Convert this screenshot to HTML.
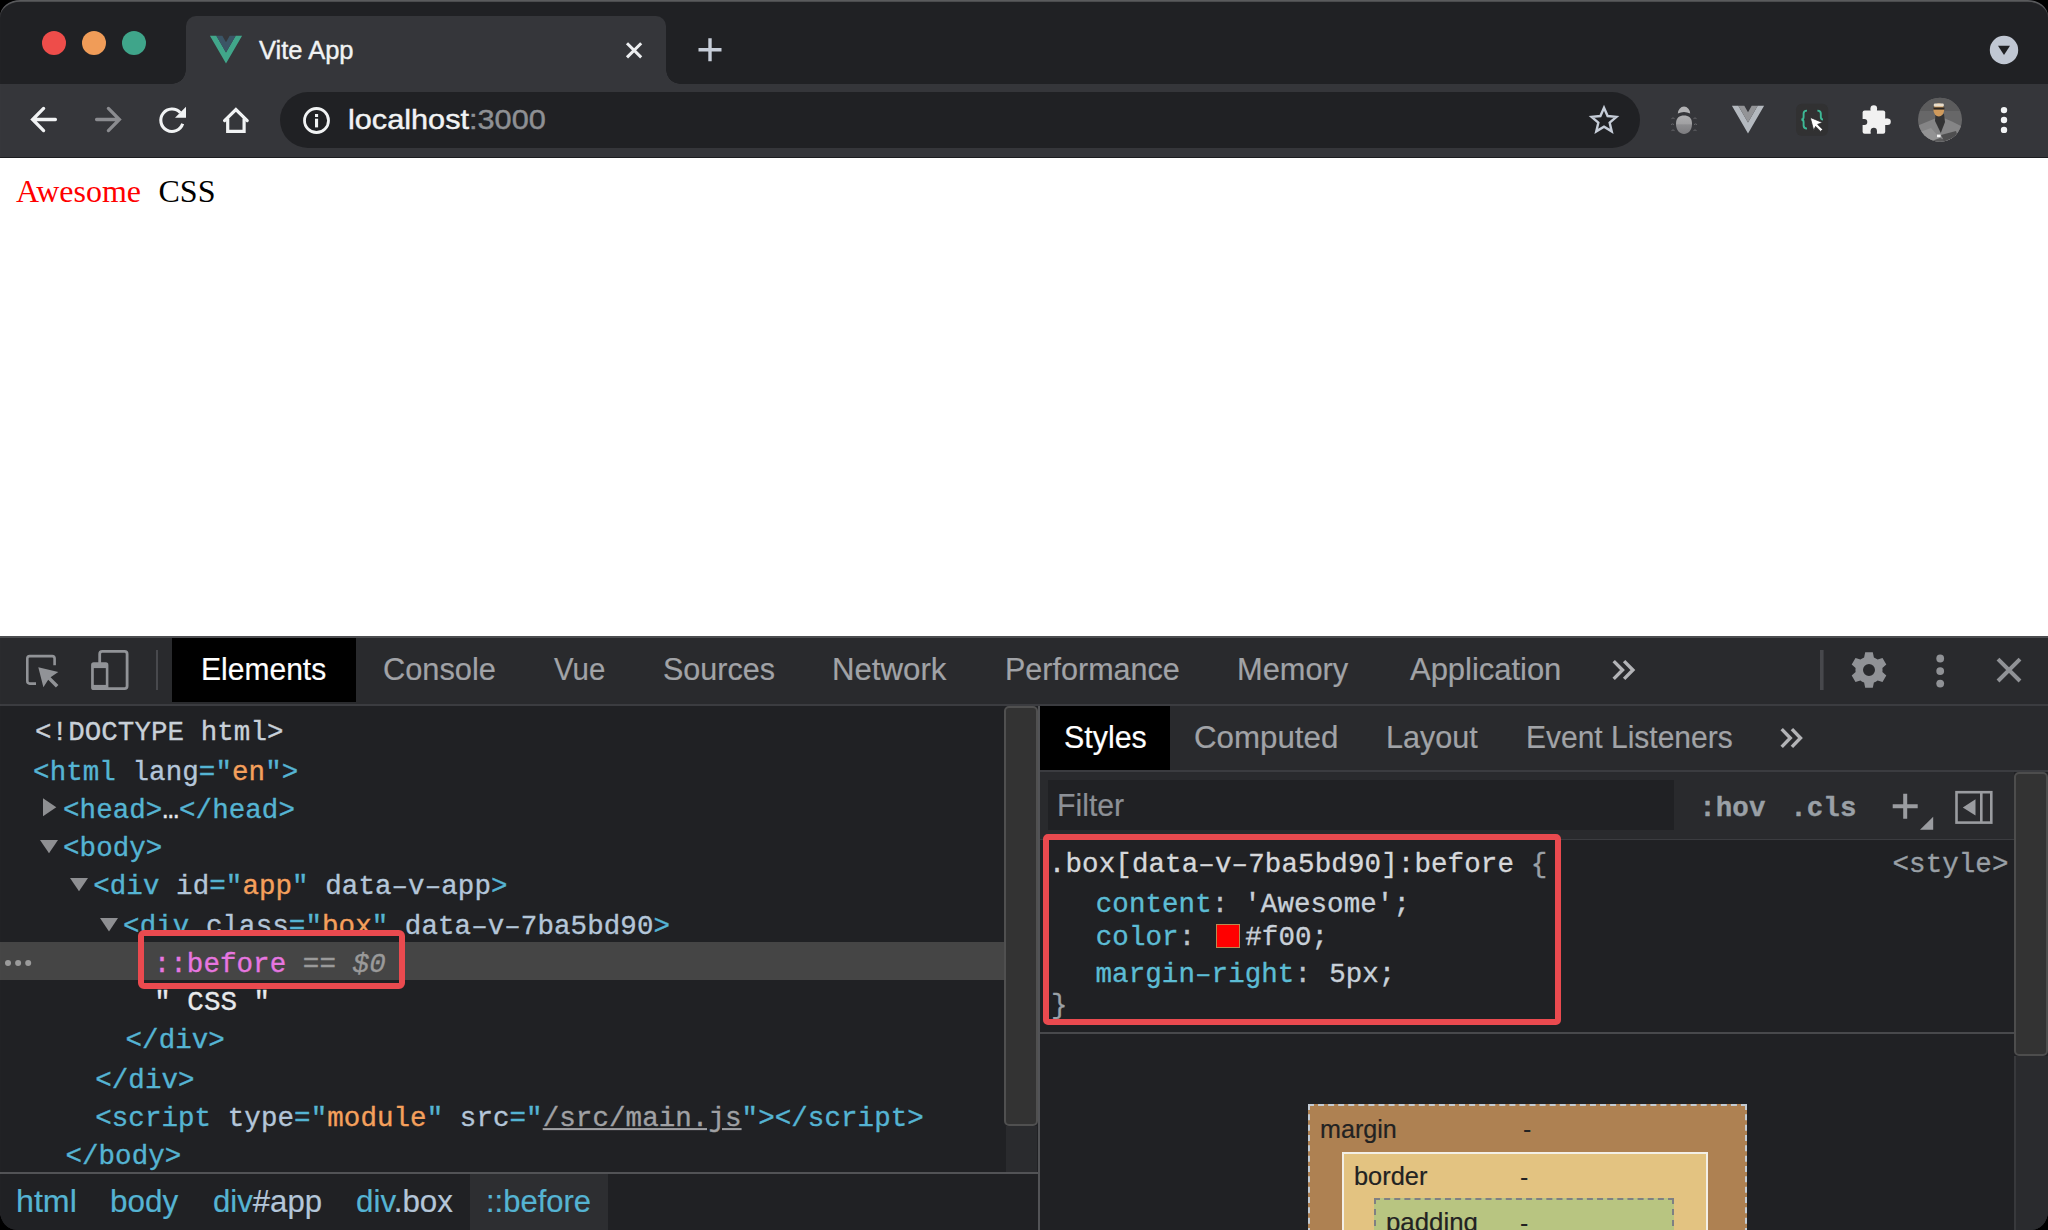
<!DOCTYPE html>
<html lang="en">
<head>
<meta charset="utf-8">
<title>Vite App</title>
<style>
*{box-sizing:border-box;margin:0;padding:0}
html,body{width:2048px;height:1230px;overflow:hidden;background:#000}
body{font-family:"Liberation Sans",sans-serif;position:relative}
.abs{position:absolute}
.t{position:absolute;white-space:pre}
#win{position:absolute;left:0;top:0;width:2048px;height:1230px;border-radius:20px 20px 17px 17px / 16px 16px 19px 19px;overflow:hidden;background:#202124}
#tab{position:absolute;left:186px;top:16px;width:480px;height:68px;background:#35363a;border-radius:10px 10px 0 0}
#tab:before,#tab:after{content:"";position:absolute;bottom:0;width:14px;height:14px;background:radial-gradient(circle at 0 0,rgba(0,0,0,0) 13.5px,#35363a 14px)}
#tab:before{left:-14px}
#tab:after{right:-14px;transform:scaleX(-1)}
.tag{color:#55b4d3}.an{color:#b4c6d9}.av{color:#f5a05c}.g{color:#9aa0a6}.w{color:#e8eaed}.p{color:#5cbcd4}.v{color:#c8d0d8}
</style>
</head>
<body>
<div id="win">
<div class="abs" style="left:0px;top:0px;width:2048px;height:84px;background:#202124;"></div>
<div id="tab"></div>
<div class="abs" style="left:0px;top:84px;width:2048px;height:74px;background:#35363a;border-bottom:1.3px solid #1c1d20;"></div>
<div class="abs" style="left:280px;top:92px;width:1360px;height:56px;background:#202124;border-radius:28px;"></div>
<div class="abs" style="left:42px;top:31px;width:24px;height:24px;background:#ee4d4a;border-radius:50%;"></div>
<div class="abs" style="left:82px;top:31px;width:24px;height:24px;background:#f09c58;border-radius:50%;"></div>
<div class="abs" style="left:122px;top:31px;width:24px;height:24px;background:#3fa58a;border-radius:50%;"></div>
<div class="t" style="left:258.7px;top:34.8px;font-family:'Liberation Sans',sans-serif;font-size:25.4px;line-height:30px;color:#f1f3f4;transform:scale(1.0044,1);transform-origin:0 23.8px;-webkit-text-stroke-width:0.4px;">Vite App</div>
<div class="t" style="left:348.31px;top:103.1px;font-family:'Liberation Sans',sans-serif;font-size:28px;line-height:34px;color:#f1f3f4;transform:scale(1.0951,1);transform-origin:0 26.7px;-webkit-text-stroke-width:0.45px;">localhost<span style="color:#8e9094">:3000</span></div>
<div class="abs" style="left:0px;top:158px;width:2048px;height:478px;background:#fff;"></div>
<div class="t" style="left:16px;top:171.8px;font-family:'Liberation Serif',serif;font-size:32px;line-height:38px;color:#ff0000;">Awesome</div>
<div class="t" style="left:158.5px;top:171.8px;font-family:'Liberation Serif',serif;font-size:32px;line-height:38px;color:#000;">CSS</div>
<div class="abs" style="left:0px;top:636px;width:2048px;height:594px;background:#202124;"></div>
<div class="abs" style="left:0px;top:636px;width:2048px;height:2px;background:#4c4d50;"></div>
<div class="abs" style="left:0px;top:638px;width:2048px;height:68px;background:#292a2d;border-bottom:2px solid #3b3c40;"></div>
<div class="abs" style="left:172px;top:638px;width:184px;height:64px;background:#000;"></div>
<div class="t" style="left:200.8px;top:650.1px;font-family:'Liberation Sans',sans-serif;font-size:31.5px;line-height:38px;color:#fff;transform:scale(0.9536,1);transform-origin:0 29.9px;-webkit-text-stroke-width:0.2px;">Elements</div>
<div class="t" style="left:382.96px;top:650.1px;font-family:'Liberation Sans',sans-serif;font-size:31.5px;line-height:38px;color:#a1a3a7;transform:scale(0.9772,1);transform-origin:0 29.9px;-webkit-text-stroke-width:0.2px;">Console</div>
<div class="t" style="left:554.0px;top:650.1px;font-family:'Liberation Sans',sans-serif;font-size:31.5px;line-height:38px;color:#a1a3a7;transform:scale(0.9337,1);transform-origin:0 29.9px;-webkit-text-stroke-width:0.2px;">Vue</div>
<div class="t" style="left:662.63px;top:650.1px;font-family:'Liberation Sans',sans-serif;font-size:31.5px;line-height:38px;color:#a1a3a7;transform:scale(0.9683,1);transform-origin:0 29.9px;-webkit-text-stroke-width:0.2px;">Sources</div>
<div class="t" style="left:832.21px;top:650.1px;font-family:'Liberation Sans',sans-serif;font-size:31.5px;line-height:38px;color:#a1a3a7;transform:scale(0.9899,1);transform-origin:0 29.9px;-webkit-text-stroke-width:0.2px;">Network</div>
<div class="t" style="left:1004.96px;top:650.1px;font-family:'Liberation Sans',sans-serif;font-size:31.5px;line-height:38px;color:#a1a3a7;transform:scale(0.9691,1);transform-origin:0 29.9px;-webkit-text-stroke-width:0.2px;">Performance</div>
<div class="t" style="left:1237.24px;top:650.1px;font-family:'Liberation Sans',sans-serif;font-size:31.5px;line-height:38px;color:#a1a3a7;transform:scale(0.9776,1);transform-origin:0 29.9px;-webkit-text-stroke-width:0.2px;">Memory</div>
<div class="t" style="left:1409.6px;top:650.1px;font-family:'Liberation Sans',sans-serif;font-size:31.5px;line-height:38px;color:#a1a3a7;transform:scale(0.982,1);transform-origin:0 29.9px;-webkit-text-stroke-width:0.2px;">Application</div>
<div class="abs" style="left:0px;top:942px;width:1004px;height:38.2px;background:#454545;"></div>
<div class="t" style="left:34.99px;top:716.2px;font-family:'Liberation Mono',monospace;font-size:27.5px;line-height:33px;color:#c8d0d8;letter-spacing:0.07px;transform:scale(1,1.03);transform-origin:0 23.8px;-webkit-text-stroke-width:0.35px;"><span class="v">&lt;!DOCTYPE html&gt;</span></div>
<div class="t" style="left:33.09px;top:756.2px;font-family:'Liberation Mono',monospace;font-size:27.5px;line-height:33px;color:#c8d0d8;letter-spacing:0.07px;transform:scale(1,1.03);transform-origin:0 23.8px;-webkit-text-stroke-width:0.35px;"><span class="tag">&lt;html</span> <span class="an">lang</span><span class="tag">="</span><span class="av">en</span><span class="tag">"&gt;</span></div>
<div class="t" style="left:62.99px;top:793.9px;font-family:'Liberation Mono',monospace;font-size:27.5px;line-height:33px;color:#c8d0d8;letter-spacing:0.07px;transform:scale(1,1.03);transform-origin:0 23.8px;-webkit-text-stroke-width:0.35px;"><span class="tag">&lt;head&gt;</span><span class="w">…</span><span class="tag">&lt;/head&gt;</span></div>
<div class="t" style="left:62.99px;top:832.0px;font-family:'Liberation Mono',monospace;font-size:27.5px;line-height:33px;color:#c8d0d8;letter-spacing:0.07px;transform:scale(1,1.03);transform-origin:0 23.8px;-webkit-text-stroke-width:0.35px;"><span class="tag">&lt;body&gt;</span></div>
<div class="t" style="left:93.19px;top:870.4px;font-family:'Liberation Mono',monospace;font-size:27.5px;line-height:33px;color:#c8d0d8;letter-spacing:0.07px;transform:scale(1,1.03);transform-origin:0 23.8px;-webkit-text-stroke-width:0.35px;"><span class="tag">&lt;div</span> <span class="an">id</span><span class="tag">="</span><span class="av">app</span><span class="tag">"</span> <span class="an">data–v–app</span><span class="tag">&gt;</span></div>
<div class="t" style="left:123.09px;top:910.0px;font-family:'Liberation Mono',monospace;font-size:27.5px;line-height:33px;color:#c8d0d8;letter-spacing:0.07px;transform:scale(1,1.03);transform-origin:0 23.8px;-webkit-text-stroke-width:0.35px;"><span class="tag">&lt;div</span> <span class="an">class</span><span class="tag">="</span><span class="av">box</span><span class="tag">"</span> <span class="an">data–v–7ba5bd90</span><span class="tag">&gt;</span></div>
<div class="t" style="left:154.19px;top:986.4px;font-family:'Liberation Mono',monospace;font-size:27.5px;line-height:33px;color:#c8d0d8;letter-spacing:0.07px;transform:scale(1,1.03);transform-origin:0 23.8px;-webkit-text-stroke-width:0.35px;"><span class="w">" CSS "</span></div>
<div class="t" style="left:125.49px;top:1024.1px;font-family:'Liberation Mono',monospace;font-size:27.5px;line-height:33px;color:#c8d0d8;letter-spacing:0.07px;transform:scale(1,1.03);transform-origin:0 23.8px;-webkit-text-stroke-width:0.35px;"><span class="tag">&lt;/div&gt;</span></div>
<div class="t" style="left:95.19px;top:1064.2px;font-family:'Liberation Mono',monospace;font-size:27.5px;line-height:33px;color:#c8d0d8;letter-spacing:0.07px;transform:scale(1,1.03);transform-origin:0 23.8px;-webkit-text-stroke-width:0.35px;"><span class="tag">&lt;/div&gt;</span></div>
<div class="t" style="left:95.19px;top:1102.1px;font-family:'Liberation Mono',monospace;font-size:27.5px;line-height:33px;color:#c8d0d8;letter-spacing:0.07px;transform:scale(1,1.03);transform-origin:0 23.8px;-webkit-text-stroke-width:0.35px;"><span class="tag">&lt;script</span> <span class="an">type</span><span class="tag">="</span><span class="av">module</span><span class="tag">"</span> <span class="an">src</span><span class="tag">="</span><span style="color:#a0a1a4;text-decoration:underline">/src/main.js</span><span class="tag">"&gt;&lt;/script&gt;</span></div>
<div class="t" style="left:65.39px;top:1140.2px;font-family:'Liberation Mono',monospace;font-size:27.5px;line-height:33px;color:#c8d0d8;letter-spacing:0.07px;transform:scale(1,1.03);transform-origin:0 23.8px;-webkit-text-stroke-width:0.35px;"><span class="tag">&lt;/body&gt;</span></div>
<div class="t" style="left:153.7px;top:947.9px;font-family:'Liberation Mono',monospace;font-size:27.5px;line-height:33px;color:#bdc6cf;letter-spacing:0.07px;transform:scale(1,1.03);transform-origin:0 23.8px;-webkit-text-stroke-width:0.35px;"><span style="color:#e776e0">::before</span><span style="color:#9a9a9a"> == <i>$0</i></span></div>
<div class="abs" style="left:138.1px;top:930.2px;width:267.3px;height:58.9px;background:transparent;border:6.5px solid #ea4a4f;border-radius:6px;"></div>
<div class="abs" style="left:1004px;top:706px;width:34px;height:420px;background:#333;border:2px solid #505050;border-radius:5px;"></div>
<div class="abs" style="left:1006px;top:1126px;width:31px;height:46px;background:#2a2b2e;"></div>
<div class="abs" style="left:0px;top:1172px;width:1038px;height:2px;background:#525356;"></div>
<div class="abs" style="left:1037.5px;top:706px;width:2.5px;height:524px;background:#525356;"></div>
<div class="abs" style="left:470px;top:1174px;width:138px;height:56px;background:#2d2e31;"></div>
<div class="t" style="left:16.21px;top:1182.1px;font-family:'Liberation Sans',sans-serif;font-size:31.5px;line-height:38px;color:#55b4d3;transform:scale(1.0227,1);transform-origin:0 29.9px;-webkit-text-stroke-width:0.2px;"><span class="tag">html</span></div>
<div class="t" style="left:110.11px;top:1182.1px;font-family:'Liberation Sans',sans-serif;font-size:31.5px;line-height:38px;color:#55b4d3;transform:scale(0.9975,1);transform-origin:0 29.9px;-webkit-text-stroke-width:0.2px;"><span class="tag">body</span></div>
<div class="t" style="left:213.36px;top:1182.1px;font-family:'Liberation Sans',sans-serif;font-size:31.5px;line-height:38px;color:#55b4d3;transform:scale(0.9877,1);transform-origin:0 29.9px;-webkit-text-stroke-width:0.2px;"><span class="tag">div</span><span class="an">#app</span></div>
<div class="t" style="left:355.75px;top:1182.1px;font-family:'Liberation Sans',sans-serif;font-size:31.5px;line-height:38px;color:#55b4d3;transform:scale(0.9946,1);transform-origin:0 29.9px;-webkit-text-stroke-width:0.2px;"><span class="tag">div</span><span class="an">.box</span></div>
<div class="t" style="left:486.41px;top:1182.1px;font-family:'Liberation Sans',sans-serif;font-size:31.5px;line-height:38px;color:#55b4d3;transform:scale(0.9835,1);transform-origin:0 29.9px;-webkit-text-stroke-width:0.2px;"><span class="tag">::before</span></div>
<div class="abs" style="left:1040px;top:706px;width:1008px;height:66px;background:#292a2d;border-bottom:2px solid #3b3c40;"></div>
<div class="abs" style="left:1040px;top:706px;width:130px;height:64px;background:#000;"></div>
<div class="t" style="left:1064.03px;top:718.1px;font-family:'Liberation Sans',sans-serif;font-size:31.5px;line-height:38px;color:#fff;transform:scale(0.965,1);transform-origin:0 29.9px;-webkit-text-stroke-width:0.2px;">Styles</div>
<div class="t" style="left:1193.54px;top:718.1px;font-family:'Liberation Sans',sans-serif;font-size:31.5px;line-height:38px;color:#a1a3a7;transform:scale(0.9929,1);transform-origin:0 29.9px;-webkit-text-stroke-width:0.2px;">Computed</div>
<div class="t" style="left:1386.05px;top:718.1px;font-family:'Liberation Sans',sans-serif;font-size:31.5px;line-height:38px;color:#a1a3a7;transform:scale(0.9709,1);transform-origin:0 29.9px;-webkit-text-stroke-width:0.2px;">Layout</div>
<div class="t" style="left:1526.0px;top:718.1px;font-family:'Liberation Sans',sans-serif;font-size:31.5px;line-height:38px;color:#a1a3a7;transform:scale(0.9519,1);transform-origin:0 29.9px;-webkit-text-stroke-width:0.2px;">Event Listeners</div>
<div class="abs" style="left:1040px;top:772px;width:974px;height:68px;background:#292a2d;border-bottom:1px solid #3b3c40;"></div>
<div class="abs" style="left:1048px;top:780px;width:626px;height:50px;background:#202124;"></div>
<div class="t" style="left:1057.08px;top:786.1px;font-family:'Liberation Sans',sans-serif;font-size:31.5px;line-height:38px;color:#8c9096;transform:scale(0.9598,1);transform-origin:0 29.9px;-webkit-text-stroke-width:0.2px;">Filter</div>
<div class="t" style="left:1699.21px;top:792.2px;font-family:'Liberation Mono',monospace;font-size:27.5px;line-height:33px;color:#9aa0a6;font-weight:bold;letter-spacing:0.07px;transform:scale(1,1.03);transform-origin:0 23.8px;-webkit-text-stroke-width:0.35px;">:hov</div>
<div class="t" style="left:1790.21px;top:792.2px;font-family:'Liberation Mono',monospace;font-size:27.5px;line-height:33px;color:#9aa0a6;font-weight:bold;letter-spacing:0.07px;transform:scale(1,1.03);transform-origin:0 23.8px;-webkit-text-stroke-width:0.35px;">.cls</div>
<div class="abs" style="left:2014px;top:772px;width:34px;height:284px;background:#333;border:2px solid #4d4d4d;border-radius:5px;"></div>
<div class="abs" style="left:2014px;top:1056px;width:34px;height:174px;background:#2a2b2e;border-left:2px solid #38393c;"></div>
<div class="t" style="left:1048.8px;top:848.2px;font-family:'Liberation Mono',monospace;font-size:27.5px;line-height:33px;color:#e8eaed;letter-spacing:0.115px;transform:scale(1,1.03);transform-origin:0 23.8px;-webkit-text-stroke-width:0.35px;"><span style="color:#d6d8db">.box[data–v–7ba5bd90]:before</span> <span class="g">{</span></div>
<div class="t" style="left:1892.49px;top:848.2px;font-family:'Liberation Mono',monospace;font-size:27.5px;line-height:33px;color:#9aa0a6;letter-spacing:0.07px;transform:scale(1,1.03);transform-origin:0 23.8px;-webkit-text-stroke-width:0.35px;">&lt;style&gt;</div>
<div class="t" style="left:1095.75px;top:888.0px;font-family:'Liberation Mono',monospace;font-size:27.5px;line-height:33px;color:#c8d0d8;letter-spacing:0.07px;transform:scale(1,1.03);transform-origin:0 23.8px;-webkit-text-stroke-width:0.35px;"><span class="p">content</span><span style="color:#bcc2c9">:</span></div>
<div class="t" style="left:1244.26px;top:888.0px;font-family:'Liberation Mono',monospace;font-size:27.5px;line-height:33px;color:#c8d0d8;letter-spacing:0.07px;transform:scale(1,1.03);transform-origin:0 23.8px;-webkit-text-stroke-width:0.35px;">'Awesome';</div>
<div class="t" style="left:1095.75px;top:921.4px;font-family:'Liberation Mono',monospace;font-size:27.5px;line-height:33px;color:#c8d0d8;letter-spacing:0.07px;transform:scale(1,1.03);transform-origin:0 23.8px;-webkit-text-stroke-width:0.35px;"><span class="p">color</span><span style="color:#bcc2c9">:</span></div>
<div class="abs" style="left:1216px;top:924px;width:24px;height:24px;background:#ff0000;border:1px solid #b98a52;"></div>
<div class="t" style="left:1245.31px;top:921.4px;font-family:'Liberation Mono',monospace;font-size:27.5px;line-height:33px;color:#c8d0d8;letter-spacing:0.07px;transform:scale(1,1.03);transform-origin:0 23.8px;-webkit-text-stroke-width:0.35px;">#f00;</div>
<div class="t" style="left:1095.56px;top:957.8px;font-family:'Liberation Mono',monospace;font-size:27.5px;line-height:33px;color:#c8d0d8;letter-spacing:0.07px;transform:scale(1,1.03);transform-origin:0 23.8px;-webkit-text-stroke-width:0.35px;"><span class="p">margin–right</span><span style="color:#bcc2c9">:</span></div>
<div class="t" style="left:1329.15px;top:957.8px;font-family:'Liberation Mono',monospace;font-size:27.5px;line-height:33px;color:#c8d0d8;letter-spacing:0.07px;transform:scale(1,1.03);transform-origin:0 23.8px;-webkit-text-stroke-width:0.35px;">5px;</div>
<div class="t" style="left:1051.0px;top:988.8px;font-family:'Liberation Mono',monospace;font-size:27.5px;line-height:33px;color:#9aa0a6;letter-spacing:0.07px;transform:scale(1,1.03);transform-origin:0 23.8px;-webkit-text-stroke-width:0.3px;">}</div>
<div class="abs" style="left:1042.6px;top:833.7px;width:518.6px;height:191px;background:transparent;border:6.3px solid #ea4a4f;border-radius:5px;"></div>
<div class="abs" style="left:1040px;top:1032px;width:974px;height:2px;background:#48494c;"></div>
<div class="abs" style="left:1307.5px;top:1103.5px;width:439px;height:130px;background:#ae8152;border:2.5px dashed #c3cbd3;"></div>
<div class="t" style="left:1319.77px;top:1113.5px;font-family:'Liberation Sans',sans-serif;font-size:26px;line-height:31px;color:#222;transform:scale(0.9661,1);transform-origin:0 24.5px;-webkit-text-stroke-width:0.2px;">margin</div>
<div class="t" style="left:1523px;top:1114.3px;font-family:'Liberation Sans',sans-serif;font-size:25px;line-height:30px;color:#222;">-</div>
<div class="abs" style="left:1342px;top:1152px;width:366px;height:90px;background:#e3c381;border:2.5px solid #f3efe6;"></div>
<div class="t" style="left:1353.68px;top:1161.0px;font-family:'Liberation Sans',sans-serif;font-size:26px;line-height:31px;color:#222;transform:scale(0.9765,1);transform-origin:0 24.5px;-webkit-text-stroke-width:0.2px;">border</div>
<div class="t" style="left:1520px;top:1161.8px;font-family:'Liberation Sans',sans-serif;font-size:25px;line-height:30px;color:#222;">-</div>
<div class="abs" style="left:1374px;top:1198px;width:300px;height:50px;background:#b8c581;border:2.5px dashed #7f8083;"></div>
<div class="t" style="left:1386.45px;top:1206.5px;font-family:'Liberation Sans',sans-serif;font-size:26px;line-height:31px;color:#222;transform:scale(0.9928,1);transform-origin:0 24.5px;-webkit-text-stroke-width:0.2px;">padding</div>
<div class="t" style="left:1520px;top:1208.0px;font-family:'Liberation Sans',sans-serif;font-size:25px;line-height:30px;color:#222;">-</div>
<div class="abs" style="left:0;top:0;width:2048px;height:1230px;border-radius:20px 20px 17px 17px / 16px 16px 19px 19px;box-shadow:inset 0 1.7px 0.7px rgba(255,255,255,.27);pointer-events:none"></div>
<svg class="abs" style="left:0;top:0" width="2048" height="1230" viewBox="0 0 2048 1230">
<defs>
<clipPath id="avc"><circle cx="1940" cy="119.7" r="22"/></clipPath>
<linearGradient id="bugg" x1="0" y1="0" x2="0" y2="1"><stop offset="0" stop-color="#aeaeb0"/><stop offset="0.45" stop-color="#a0a0a2"/><stop offset="0.5" stop-color="#8d8d90"/><stop offset="1" stop-color="#7c7c7f"/></linearGradient>
</defs>
<!-- tab favicon (vue) -->
<g transform="translate(209.9,35.8) scale(0.1258)">
<path d="M0,0 L128,220.8 L256,0 H204.8 L128,132.48 L51.2,0 Z" fill="#41a68a"/>
<path d="M51.2,0 L128,132.48 L204.8,0 H157.44 L128,51.2 L98.56,0 Z" fill="#3b5566"/>
</g>
<!-- tab close -->
<path d="M627,43.2 L641.2,57.4 M641.2,43.2 L627,57.4" stroke="#eceef0" stroke-width="3" fill="none"/>
<!-- new tab plus -->
<path d="M710,38.3 V61.3 M698.5,49.8 H721.5" stroke="#c6cdd8" stroke-width="3.4" fill="none"/>
<!-- tab search circle -->
<circle cx="2004" cy="50" r="14.2" fill="#c0c7d3"/>
<path d="M1998,45.8 H2010 L2004,54.9 Z" fill="#202124"/>
<!-- back -->
<path d="M43.6,108.4 L32.6,119.5 L43.6,130.6 M33,119.5 H55.4" stroke="#f1f3f4" stroke-width="3.3" stroke-linecap="round" stroke-linejoin="miter" fill="none"/>
<!-- forward -->
<path d="M108.4,108.4 L119.4,119.5 L108.4,130.6 M119,119.5 H96.6" stroke="#8b8c90" stroke-width="3.3" stroke-linecap="round" stroke-linejoin="miter" fill="none"/>
<!-- reload -->
<path d="M180.3,112.7 A11.2,11.2 0 1 0 182.65,123.7" stroke="#f1f3f4" stroke-width="3.1" fill="none"/>
<path d="M186,106.8 V117.8 H175 Z" fill="#f1f3f4"/>
<!-- home -->
<path d="M224.6,120.6 L235.9,109.6 L247.2,120.6" stroke="#f1f3f4" stroke-width="3.2" stroke-linecap="round" stroke-linejoin="miter" fill="none"/>
<path d="M227.7,118.5 V131.3 H244.1 V118.5" stroke="#f1f3f4" stroke-width="3.2" fill="none"/>
<!-- info -->
<circle cx="316.5" cy="120.5" r="12" stroke="#f1f3f4" stroke-width="2.8" fill="none"/>
<rect x="315" y="114" width="3.1" height="3" fill="#f1f3f4"/>
<rect x="315" y="118.7" width="3.1" height="8.7" fill="#f1f3f4"/>
<!-- star -->
<path d="M1604,106.6 L1608.2,116.2 L1618.4,117.1 L1610.6,123.9 L1613,134 L1604,128.6 L1595,134 L1597.4,123.9 L1589.6,117.1 L1599.8,116.2 Z" stroke="#c6cdd8" stroke-width="2.8" stroke-linejoin="miter" fill="none" transform="translate(1604,120.2) scale(0.86) translate(-1604,-121)"/>
<!-- bug ext -->
<path d="M1677.8,113.6 A6.2,7 0 0 1 1690.2,113.6 Q1684,110.6 1677.8,113.6 Z" fill="#b2b2b4"/>
<path d="M1676,124 C1676,117.5 1679.5,115.6 1684,115.6 C1688.5,115.6 1692,117.5 1692,124 C1692,130.5 1688,134 1684,134 C1680,134 1676,130.5 1676,124 Z" fill="url(#bugg)"/>
<path d="M1671.5,118.6 q1.5,-1.4 3,0 M1671,124.6 q1.5,-1.4 3,0 M1671.5,130.6 q1.5,-1.4 3,0 M1693.5,118.6 q1.5,-1.4 3,0 M1694,124.6 q1.5,-1.4 3,0 M1693.5,130.6 q1.5,-1.4 3,0" stroke="#66666a" stroke-width="1" fill="none"/>
<!-- grey vue -->
<g transform="translate(1731.9,105.8) scale(0.1258)">
<path d="M0,0 L128,220.8 L256,0 H204.8 L128,132.48 L51.2,0 Z" fill="#b4b9bf"/>
<path d="M51.2,0 L128,132.48 L204.8,0 H157.44 L128,51.2 L98.56,0 Z" fill="#939497"/>
</g>
<!-- braces ext -->
<rect x="1796.1" y="103.8" width="32" height="32" rx="5.5" fill="#313132"/>
<path d="M1807,110.6 Q1803.6,110.6 1803.6,113.6 V117 Q1803.6,119.4 1801.4,119.5 Q1803.6,119.6 1803.6,122 V125.6 Q1803.6,128.6 1807,128.6" stroke="#3db996" stroke-width="1.9" fill="none"/>
<path d="M1817.4,110.6 Q1820.8,110.6 1820.8,113.6 V117 Q1820.8,119.4 1823,119.5" stroke="#3db996" stroke-width="1.9" fill="none"/>
<path d="M1810.2,117.4 L1822.6,122.6 L1817.6,124.4 L1822.8,129.4 L1820.6,131.4 L1815.6,126.4 L1813.7,130.4 Z" fill="#fff" stroke="#2a2a2b" stroke-width="0.8"/>
<!-- puzzle -->
<g fill="#f1f1f1">
<rect x="1862.6" y="110.5" width="22.6" height="23.2" rx="2"/>
<circle cx="1873.8" cy="108.6" r="3.3"/><rect x="1870.7" y="108.6" width="6.2" height="3"/>
<circle cx="1887.5" cy="121.8" r="3.3"/><rect x="1884" y="118.6" width="3.5" height="6.4"/>
</g>
<g fill="#35363a">
<circle cx="1873.8" cy="130.8" r="3.1"/><rect x="1870.7" y="130.8" width="6.2" height="3.4"/>
<circle cx="1864.3" cy="122" r="3"/><rect x="1862" y="119" width="2.3" height="6"/>
</g>
<!-- avatar -->
<g clip-path="url(#avc)">
<rect x="1917" y="97" width="46" height="46" fill="#676768"/>
<rect x="1917" y="97" width="46" height="14" fill="#5c5c5d"/>
<path d="M1917,126 L1929,121 L1935,118.5 L1945,118.5 L1952,121.5 L1963,127 V143 H1917 Z" fill="#858586"/>
<path d="M1935.5,114 H1944 L1945,122 L1940.8,133 L1935,121 Z" fill="#333334"/>
<path d="M1917,133 L1931,128 L1940,138 L1963,131 V143 H1917 Z" fill="#939394"/>
<path d="M1926,143 L1940,138 L1955,143 Z" fill="#5a5a5b"/>
<path d="M1941,135 L1956,131 L1958,137 L1944,141 Z" fill="#4e4e4f"/>
<ellipse cx="1938.8" cy="109.8" rx="5.4" ry="6.6" fill="#cf9a5c"/>
<rect x="1933.8" y="103.4" width="10" height="3" rx="1.2" fill="#e6dccb"/>
<rect x="1933.4" y="107.4" width="11" height="2.2" fill="#2c2622"/>
<rect x="1937" y="134.6" width="3.6" height="2.6" fill="#f4f4f4"/>
</g>
<!-- chrome menu dots -->
<circle cx="2004" cy="110.1" r="3.2" fill="#f1f3f4"/><circle cx="2004" cy="120" r="3.2" fill="#f1f3f4"/><circle cx="2004" cy="129.9" r="3.2" fill="#f1f3f4"/>

<!-- ================= devtools toolbar ================= -->
<!-- inspect -->
<path d="M54.6,665.2 V658.6 Q54.6,656.1 52.1,656.1 H29.8 Q27.3,656.1 27.3,658.6 V681.1 Q27.3,683.6 29.8,683.6 H36" stroke="#919397" stroke-width="2.6" fill="none"/>
<path d="M38.3,667.3 L58.3,672 L50.6,677.2 L58.4,685 L55.9,687.4 L48.2,679.7 L43.4,687.3 Z" fill="#919397"/>
<!-- device -->
<rect x="99.7" y="651.4" width="27.4" height="37.2" rx="2.6" stroke="#919397" stroke-width="2.8" fill="none"/>
<rect x="91.1" y="662.3" width="17.3" height="27.7" rx="2.6" fill="#919397"/>
<rect x="93.8" y="668.1" width="12" height="16.8" fill="#292a2d"/>
<!-- divider -->
<rect x="156" y="650" width="2" height="40" fill="#48494d"/>
<!-- more tabs chevrons -->
<path d="M1613.7,661.1 L1622.5,670 L1613.7,678.9 M1624.1,661.1 L1632.9,670 L1624.1,678.9" stroke="#b3b4b7" stroke-width="3.4" fill="none"/>
<!-- right divider -->
<rect x="1820" y="650" width="3.6" height="40" fill="#47484c"/>
<!-- gear -->
<g transform="translate(1869,670)" fill="#909296">
<path id="gear" d="M-3.8,-17.7 H3.8 L4.9,-12.6 A13.4,13.4 0 0 1 8.6,-10.5 L13.5,-12.1 L17.3,-5.5 L13.4,-2.1 A13.4,13.4 0 0 1 13.4,2.1 L17.3,5.5 L13.5,12.1 L8.6,10.5 A13.4,13.4 0 0 1 4.9,12.6 L3.8,17.7 H-3.8 L-4.9,12.6 A13.4,13.4 0 0 1 -8.6,10.5 L-13.5,12.1 L-17.3,5.5 L-13.4,2.1 A13.4,13.4 0 0 1 -13.4,-2.1 L-17.3,-5.5 L-13.5,-12.1 L-8.6,-10.5 A13.4,13.4 0 0 1 -4.9,-12.6 Z M0,-6 A6,6 0 1 0 0,6 A6,6 0 1 0 0,-6 Z" fill-rule="evenodd"/>
</g>
<!-- dt dots -->
<circle cx="1940.2" cy="658.5" r="3.9" fill="#909296"/><circle cx="1940.2" cy="671.1" r="3.9" fill="#909296"/><circle cx="1940.2" cy="683.6" r="3.9" fill="#909296"/>
<!-- dt close -->
<path d="M1998,659.1 L2020,681 M2020,659.1 L1998,681" stroke="#909296" stroke-width="4" fill="none"/>
<!-- tree triangles -->
<path d="M43,798.2 L56.3,807.2 L43,816.2 Z" fill="#8e8f92"/>
<path d="M40,840 H58 L49,853.3 Z" fill="#8e8f92"/>
<path d="M70,878 H88 L79,891.3 Z" fill="#8e8f92"/>
<path d="M100,918.1 H118 L109,931.5 Z" fill="#8e8f92"/>
<!-- row dots -->
<circle cx="8" cy="962.9" r="3" fill="#9b9b9b"/><circle cx="18.1" cy="962.9" r="3" fill="#9b9b9b"/><circle cx="28.2" cy="962.9" r="3" fill="#9b9b9b"/>
<!-- sidebar tabs chevrons -->
<path d="M1781.7,729.1 L1790.3,738 L1781.7,746.9 M1791.9,729.1 L1800.5,738 L1791.9,746.9" stroke="#b3b4b7" stroke-width="3.4" fill="none"/>
<!-- styles plus -->
<path d="M1905.2,793.7 V818.7 M1892.7,806.2 H1917.7" stroke="#9a9ca0" stroke-width="4" fill="none"/>
<path d="M1933.2,816.8 V829.7 H1920 Z" fill="#9a9ca0"/>
<!-- sidebar toggle -->
<rect x="1956.5" y="792.2" width="34.8" height="30.4" stroke="#9a9ca0" stroke-width="2.6" fill="none"/>
<rect x="1980" y="792" width="2.6" height="31" fill="#9a9ca0"/>
<path d="M1975.5,799.2 V815.6 L1962.8,807.4 Z" fill="#9a9ca0"/>
</svg>
</div>
</body>
</html>
